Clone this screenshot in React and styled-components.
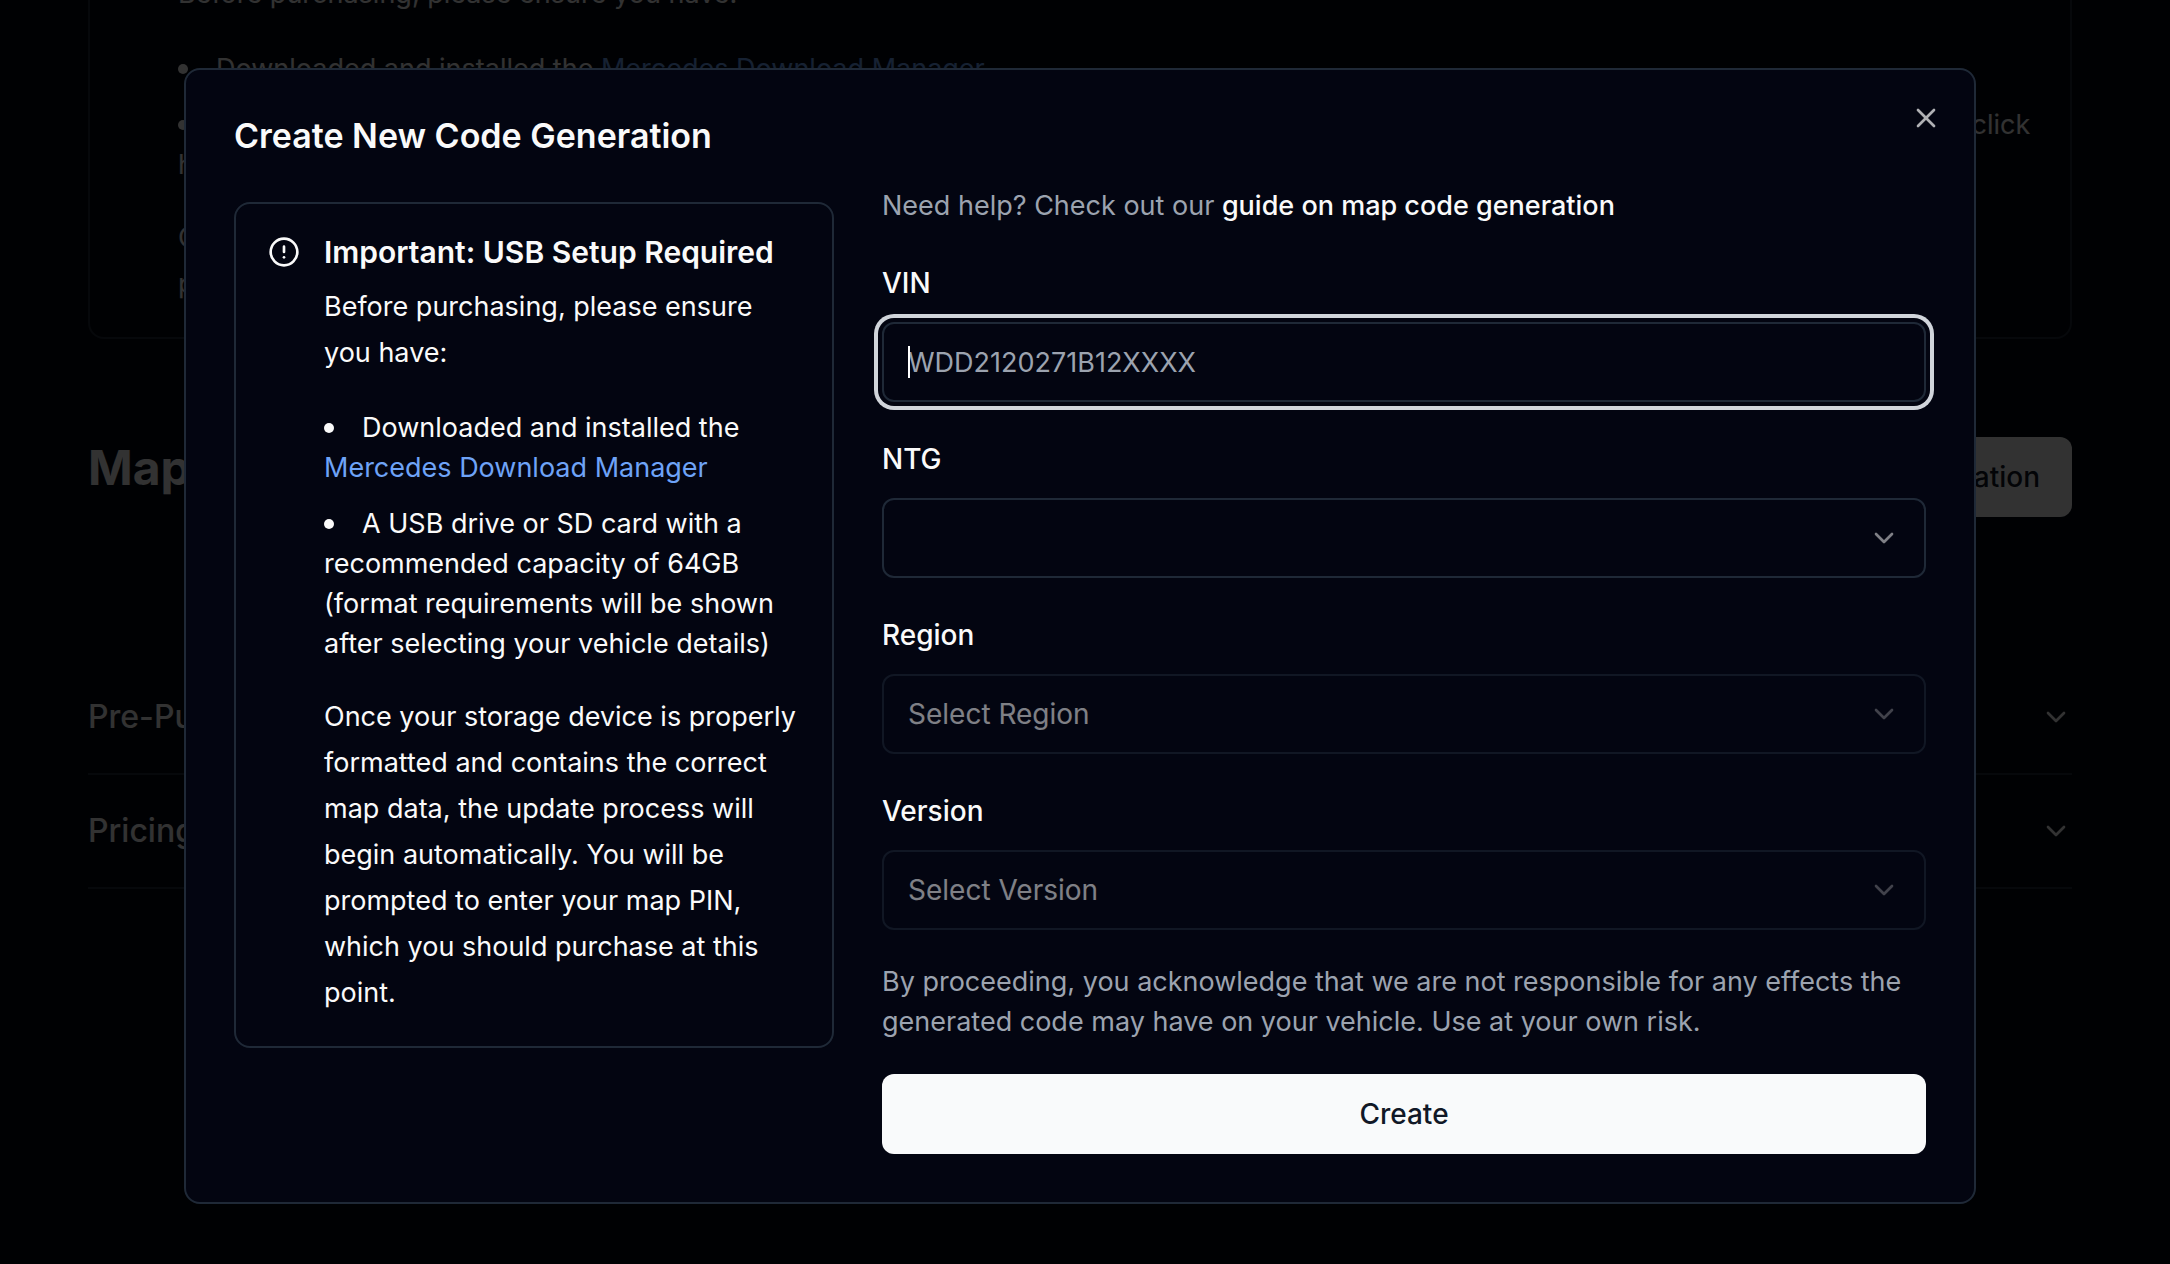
import React from 'react';
import styled, { createGlobalStyle } from 'styled-components';
import { ChevronDown, CircleAlert, X } from 'lucide-react';

const GlobalStyle = createGlobalStyle`
  *, *::before, *::after {
    box-sizing: border-box;
  }
  body {
    margin: 0;
    background: #030712;
    color: #fafafa;
    font-family: Inter, "Liberation Sans", sans-serif;
    font-size: 28px;
    line-height: 40px;
  }
  h1, h2, h5, p, ul {
    margin: 0;
    padding: 0;
  }
  a {
    color: inherit;
    text-decoration: none;
  }
  button, input, select {
    font: inherit;
    color: inherit;
  }
`;

const Page = styled.div`
  height: 100vh;
  overflow: hidden;
  padding: 0 98px 0 88px;
`;

// page is scrolled a bit, so the first alert starts above the fold
const PageContent = styled.main`
  margin-top: -111px;
`;

const PageHeader = styled.div`
  display: flex;
  justify-content: space-between;
  align-items: flex-start;
  margin: 98px 0 144px;
`;

const PageTitle = styled.h1`
  font-size: 48px;
  line-height: 62px;
  font-weight: 700;
`;

const Button = styled.button`
  display: block;
  width: ${props => props.$full ? '100%' : 'auto'};
  height: 80px;
  padding: 0 32px;
  border: 0;
  border-radius: 12px;
  background: #f9fafb;
  color: #111827;
  font-weight: 500;
  cursor: pointer;
`;

const AccordionButton = styled.button`
  display: flex;
  justify-content: space-between;
  align-items: center;
  width: 100%;
  padding: 32px 0;
  border: 0;
  border-bottom: 2px solid #1f2937;
  background: none;
  font-size: 32px;
  line-height: 48px;
  font-weight: 500;
`;

const AlertBox = styled.section`
  display: flex;
  gap: 24px;
  padding: 32px 32px 30px;
  border: 2px solid #1f2937;
  border-radius: 16px;
  font-size: 27px;
`;

const AlertIcon = styled(CircleAlert)`
  flex: none;
`;

const AlertTitle = styled.h5`
  margin-bottom: 16px;
  font-size: 30px;
  line-height: 32px;
  font-weight: 600;
`;

const AlertText = styled.p`
  line-height: 46px;
`;

const AlertList = styled.ul`
  display: flex;
  flex-direction: column;
  gap: 16px;
  margin: 32px 0 30px;
  list-style: none;
`;

const AlertItem = styled.li`
  &::before {
    content: '';
    display: inline-block;
    width: 10px;
    height: 10px;
    margin: 0 28px 4px 0;
    border-radius: 50%;
    background: currentColor;
    vertical-align: middle;
  }
`;

const BlueLink = styled.a`
  color: #6ea3f7;
`;

const Overlay = styled.div`
  position: fixed;
  inset: 0;
  display: grid;
  place-items: center;
  padding: 8px 10px 0 0;
  background: rgba(0, 0, 0, 0.8);
`;

const Dialog = styled.div`
  position: relative;
  width: 100%;
  max-width: 1792px;
  padding: 48px;
  border: 2px solid #1f2937;
  border-radius: 16px;
  background: #030511;
`;

const DialogTitle = styled.h2`
  margin-bottom: 32px;
  font-size: 34px;
  line-height: 36px;
  font-weight: 600;
`;

const CloseButton = styled.button`
  position: absolute;
  top: 32px;
  right: 32px;
  display: flex;
  padding: 0;
  border: 0;
  background: none;
  opacity: 0.7;
  cursor: pointer;
`;

const Columns = styled.div`
  display: grid;
  grid-template-columns: minmax(0, 600px) minmax(0, 1fr);
  align-items: start;
  gap: 48px;
`;

const Side = styled.div`
  padding-top: 16px;
`;

const Form = styled.form`
  display: flex;
  flex-direction: column;
  gap: 32px;
`;

const Muted = styled.p`
  color: #9ca3af;
  font-size: 27px;
`;

const GuideLink = styled.a`
  color: #fafafa;
  font-weight: 500;
`;

const Field = styled.div`
  display: flex;
  flex-direction: column;
  gap: 14px;
`;

const Label = styled.label`
  line-height: 50px;
  font-weight: 500;
`;

const Control = styled.div`
  position: relative;
  opacity: ${props => props.$disabled ? 0.5 : 1};
`;

const Input = styled.input`
  display: block;
  width: 100%;
  height: 80px;
  padding: 0 24px;
  border: 2px solid #1f2937;
  border-radius: 12px;
  outline: none;
  background: #030511;
  font-size: 27px;
  caret-color: transparent;
  box-shadow: 0 0 0 4px #030511, 0 0 0 8px #d1d5db;

  &::placeholder {
    color: #9ca3af;
    opacity: 1;
  }
`;

const Caret = styled.span`
  position: absolute;
  top: 24px;
  left: 26px;
  width: 2px;
  height: 32px;
  background: #ffffff;
`;

const Select = styled.select`
  display: block;
  width: 100%;
  height: 80px;
  padding: 0 72px 0 24px;
  border: 2px solid #1f2937;
  border-radius: 12px;
  background: #030511;
  appearance: none;

  &:disabled {
    opacity: 1;
  }
`;

const SelectIcon = styled(ChevronDown)`
  position: absolute;
  top: 24px;
  right: 26px;
  opacity: 0.5;
  pointer-events: none;
`;

const selects = [
  { id: 'ntg', label: 'NTG', placeholder: '', disabled: false },
  { id: 'region', label: 'Region', placeholder: 'Select Region', disabled: true },
  { id: 'version', label: 'Version', placeholder: 'Select Version', disabled: true },
];

const questions = ['Pre-Purchase Checklist', 'Pricing'];

const UsbAlert = ({ children }) => (
  <AlertBox>
    <AlertIcon size={32} />
    <div>
      <AlertTitle>Important: USB Setup Required</AlertTitle>
      <AlertText>Before purchasing, please ensure you have:</AlertText>
      <AlertList>
        <AlertItem>
          Downloaded and installed the <BlueLink href="#manager">Mercedes Download Manager</BlueLink>
        </AlertItem>
        <AlertItem>{children}</AlertItem>
      </AlertList>
      <AlertText>
        Once your storage device is properly formatted and contains the correct map data, the
        update process will begin automatically. You will be prompted to enter your map PIN,
        which you should purchase at this point.
      </AlertText>
    </div>
  </AlertBox>
);

export default function App() {
  return (
    <>
      <GlobalStyle />
      <Page aria-hidden="true">
        <PageContent>
          <UsbAlert>
            A USB drive or SD card with a recommended capacity of 64GB (format requirements
            will be shown after selecting your vehicle details) — click here
          </UsbAlert>
          <PageHeader>
            <PageTitle>Map Code Generations</PageTitle>
            <Button type="button">Create New Code Generation</Button>
          </PageHeader>
          {questions.map(question => (
            <AccordionButton key={question} type="button">
              {question}
              <ChevronDown size={32} />
            </AccordionButton>
          ))}
        </PageContent>
      </Page>
      <Overlay>
        <Dialog role="dialog" aria-modal="true" aria-labelledby="dialog-title">
          <DialogTitle id="dialog-title">Create New Code Generation</DialogTitle>
          <Columns>
            <Side>
              <UsbAlert>
                A USB drive or SD card with a recommended capacity of 64GB (format requirements
                will be shown after selecting your vehicle details)
              </UsbAlert>
            </Side>
            <Form onSubmit={e => e.preventDefault()}>
              <Muted>
                Need help? Check out our <GuideLink href="#guide">guide on map code generation</GuideLink>
              </Muted>
              <Field>
                <Label htmlFor="vin">VIN</Label>
                <Control>
                  <Input id="vin" type="text" placeholder="WDD2120271B12XXXX" autoFocus />
                  <Caret />
                </Control>
              </Field>
              {selects.map(({ id, label, placeholder, disabled }) => (
                <Field key={id}>
                  <Label htmlFor={id}>{label}</Label>
                  <Control $disabled={disabled}>
                    <Select id={id} disabled={disabled}>
                      <option>{placeholder}</option>
                    </Select>
                    <SelectIcon size={32} />
                  </Control>
                </Field>
              ))}
              <Muted>
                By proceeding, you acknowledge that we are not responsible for any effects the
                generated code may have on your vehicle. Use at your own risk.
              </Muted>
              <Button type="submit" $full>Create</Button>
            </Form>
          </Columns>
          <CloseButton type="button" aria-label="Close">
            <X size={32} />
          </CloseButton>
        </Dialog>
      </Overlay>
    </>
  );
}
